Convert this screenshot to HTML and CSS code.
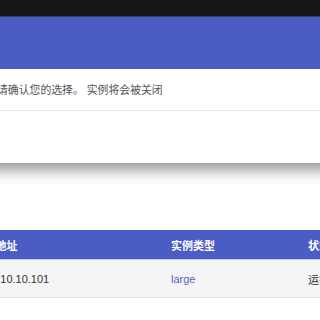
FILE: index.html
```html
<!DOCTYPE html>
<html>
<head>
<meta charset="utf-8">
<link rel="stylesheet" href="styles.css">
</head>
<body>
<div class="topbar"></div>
<div class="modal">
  <div class="modal-header"></div>
  <div class="modal-body">
    <p class="msg">请确认您的选择。 实例将会被关闭</p>
  </div>
  <div class="modal-footer"></div>
</div>
<div class="table-wrap">
  <table class="grid">
    <thead>
      <tr><th class="c1">IP地址</th><th class="c2">实例类型</th><th class="c3">状态</th></tr>
    </thead>
    <tbody>
      <tr><td class="c1">10.10.10.101</td><td class="c2"><span class="link">large</span></td><td class="c3">运行中</td></tr>
    </tbody>
  </table>
</div>
</body>
</html>
```
FILE: styles.css
```css
html, body {
  margin: 0;
  padding: 0;
  background: #fff;
  overflow: hidden;
  width: 320px;
  height: 320px;
}
body {
  font-family: "Liberation Sans", "Noto Sans CJK SC", sans-serif;
  font-size: 11px;
}
.topbar {
  height: 16px;
  background: #161616;
  border-bottom: 1px solid #3c4060;
}
.modal {
  background: #fff;
  box-shadow: 0 7px 14px rgba(0, 0, 0, 0.42);
  margin: 0 -40px;
  padding: 0 40px;
}
.modal-header {
  height: 52px;
  background: #4b5cc4;
  margin: 0 -40px;
}
.modal-body {
  height: 41px;
  border-bottom: 1px solid #e8e8e8;
  margin: 0 -40px;
  padding: 0 40px;
  display: flex;
  align-items: center;
}
.msg {
  margin: 0 0 0 -3px;
  color: #555;
  white-space: nowrap;
  line-height: 16px;
  font-size: 10.85px;
}
.modal-footer {
  height: 52px;
}
.table-wrap {
  margin-top: 67px;
  margin-left: -23px;
}
.grid {
  border-collapse: collapse;
  table-layout: fixed;
  width: 460px;
}
.grid th, .grid td {
  text-align: left;
  padding: 0 0 0 8px;
  white-space: nowrap;
  overflow: hidden;
}
.c1 { width: 178px; }
.c2 { width: 129px; }
.c3 { width: 145px; }
.grid th {
  background: #4b5cc4;
  color: #fff;
  font-weight: bold;
  height: 29px;
  border-bottom: 1px solid #c9cdea;
}
.grid td {
  background: #f5f5f5;
  color: #333;
  height: 37px;
  border-bottom: 1px solid #e3e3e3;
}
.link {
  color: #5563c1;
}
```
